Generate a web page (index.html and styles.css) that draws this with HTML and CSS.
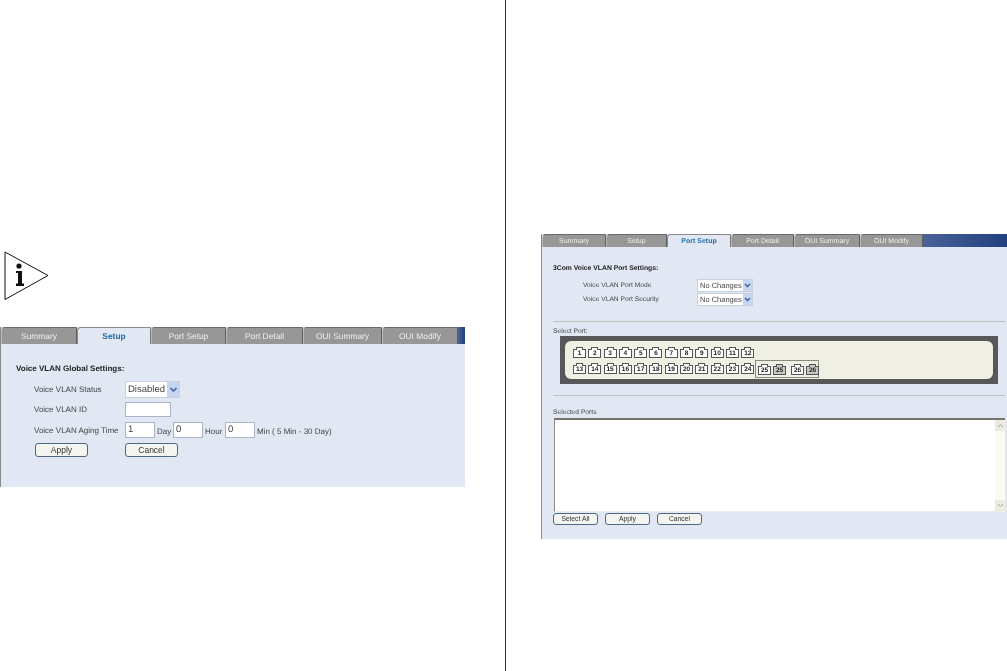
FILE: index.html
```html
<!DOCTYPE html>
<html lang="en">
<head>
<meta charset="utf-8">
<title>Voice VLAN</title>
<link rel="stylesheet" href="styles.css">
</head>
<body>
<div class="page">
  <section class="col-left">
    <svg class="note-icon" width="46" height="50" viewBox="0 0 46 50">
      <path d="M1 1 L44 24.500 L1 48.500 Z" fill="#fff" stroke="#111" stroke-width="1"/>
      <circle cx="15" cy="15" r="2.600" fill="#111"/>
      <path d="M12 20 H18 V32.500 H20 V35 H12 V32.500 H14 V22 H12 Z" fill="#111"/>
    </svg>
    <div class="panel panel-a">
      <nav class="tabs tabs-a">
        <div class="tab">Summary</div>
        <div class="tab active">Setup</div>
        <div class="tab">Port Setup</div>
        <div class="tab">Port Detail</div>
        <div class="tab">OUI Summary</div>
        <div class="tab">OUI Modify</div>
        <div class="tab-fill"></div>
      </nav>
      <div class="a-body">
        <h2 class="a-title">Voice VLAN Global Settings:</h2>
        <div class="a-row a-row-status">
          <span class="a-label">Voice VLAN Status</span>
          <div class="select select-a"><span class="select-value">Disabled</span><span class="select-arrow"><svg width="9" height="6" viewBox="0 0 9 6"><path d="M1.500 1 L4.500 4 L7.500 1" fill="none" stroke="#3d5f9e" stroke-width="1.500"/></svg></span></div>
        </div>
        <div class="a-row a-row-id">
          <span class="a-label">Voice VLAN ID</span>
          <div class="input input-id"></div>
        </div>
        <div class="a-row a-row-time">
          <span class="a-label">Voice VLAN Aging Time</span>
          <div class="input input-time">1</div><span class="unit unit-day">Day</span>
          <div class="input input-time">0</div><span class="unit unit-hour">Hour</span>
          <div class="input input-time">0</div><span class="unit unit-min">Min ( 5 Min - 30 Day)</span>
        </div>
        <div class="a-row a-row-btn">
          <div class="a-label"><button class="btn btn-a">Apply</button></div>
          <button class="btn btn-a btn-cancel">Cancel</button>
        </div>
      </div>
    </div>
  </section>
  <section class="col-right">
    <div class="panel panel-b">
      <nav class="tabs tabs-b">
        <div class="tab">Summary</div>
        <div class="tab">Setup</div>
        <div class="tab active">Port Setup</div>
        <div class="tab">Port Detail</div>
        <div class="tab">OUI Summary</div>
        <div class="tab">OUI Modify</div>
        <div class="tab-fill"></div>
      </nav>
      <div class="b-body">
        <h2 class="b-title">3Com Voice VLAN Port Settings:</h2>
        <div class="b-row">
          <span class="b-label">Voice VLAN Port Mode</span>
          <div class="select select-b"><span class="select-value">No Changes</span><span class="select-arrow"><svg width="7" height="5" viewBox="0 0 7 5"><path d="M1 1 L3.500 3.500 L6 1" fill="none" stroke="#3d5f9e" stroke-width="1.400"/></svg></span></div>
        </div>
        <div class="b-row">
          <span class="b-label">Voice VLAN Port Security</span>
          <div class="select select-b"><span class="select-value">No Changes</span><span class="select-arrow"><svg width="7" height="5" viewBox="0 0 7 5"><path d="M1 1 L3.500 3.500 L6 1" fill="none" stroke="#3d5f9e" stroke-width="1.400"/></svg></span></div>
        </div>
        <hr class="rule rule-one">
        <div class="b-caption caption-port">Select Port:</div>
        <div class="chassis">
          <div class="chassis-inner">
            <div class="ports">
              <div class="port"><i class="notch"></i><b>1</b></div>
              <div class="port"><i class="notch"></i><b>2</b></div>
              <div class="port"><i class="notch"></i><b>3</b></div>
              <div class="port"><i class="notch"></i><b>4</b></div>
              <div class="port"><i class="notch"></i><b>5</b></div>
              <div class="port"><i class="notch"></i><b>6</b></div>
              <div class="port"><i class="notch"></i><b>7</b></div>
              <div class="port"><i class="notch"></i><b>8</b></div>
              <div class="port"><i class="notch"></i><b>9</b></div>
              <div class="port"><i class="notch"></i><b>10</b></div>
              <div class="port"><i class="notch"></i><b>11</b></div>
              <div class="port"><i class="notch"></i><b>12</b></div>
              <div class="port"><i class="notch"></i><b>13</b></div>
              <div class="port"><i class="notch"></i><b>14</b></div>
              <div class="port"><i class="notch"></i><b>15</b></div>
              <div class="port"><i class="notch"></i><b>16</b></div>
              <div class="port"><i class="notch"></i><b>17</b></div>
              <div class="port"><i class="notch"></i><b>18</b></div>
              <div class="port"><i class="notch"></i><b>19</b></div>
              <div class="port"><i class="notch"></i><b>20</b></div>
              <div class="port"><i class="notch"></i><b>21</b></div>
              <div class="port"><i class="notch"></i><b>22</b></div>
              <div class="port"><i class="notch"></i><b>23</b></div>
              <div class="port"><i class="notch"></i><b>24</b></div>
            </div>
            <div class="sfp">
              <div class="port"><i class="notch"></i><b>25</b></div>
              <div class="port port-gray"><i class="notch"></i><b>25</b></div>
              <div class="port port-sep"><i class="notch"></i><b>26</b></div>
              <div class="port port-gray"><i class="notch"></i><b>26</b></div>
            </div>
          </div>
        </div>
        <hr class="rule rule-two">
        <div class="b-caption caption-selected">Selected Ports</div>
        <div class="textbox">
          <div class="textbox-main"></div>
          <div class="scroll">
            <span class="scroll-btn"><svg width="7" height="5" viewBox="0 0 7 5"><path d="M1 4 L3.500 1.500 L6 4" fill="none" stroke="#aaa69a" stroke-width="1"/></svg></span>
            <span class="scroll-track"></span>
            <span class="scroll-btn"><svg width="7" height="5" viewBox="0 0 7 5"><path d="M1 1 L3.500 3.500 L6 1" fill="none" stroke="#aaa69a" stroke-width="1"/></svg></span>
          </div>
        </div>
        <div class="b-buttons">
          <button class="btn btn-b">Select All</button>
          <button class="btn btn-b">Apply</button>
          <button class="btn btn-b">Cancel</button>
        </div>
      </div>
    </div>
  </section>
</div>
</body>
</html>
```
FILE: styles.css
```css
* { box-sizing: border-box; }
html, body { margin: 0; padding: 0; background: #fff; }
body { font-family: "Liberation Sans", Arial, sans-serif; color: #444; overflow: hidden; text-rendering: geometricPrecision; }
.page { display: flex; width: 1007px; height: 671px; will-change: transform; }

.col-left { width: 506px; height: 671px; padding-top: 251px; border-right: 1px solid #333; flex: none; }
.col-right { flex: 1; padding: 234px 0 0 35px; }
.note-icon { display: block; margin: 0 0 26px 4px; }

.panel { background: #e1e7f3; border-left: 1px solid #8a8a8a; }
.panel-a { width: 465px; height: 160px; }
.panel-b { width: 466px; height: 305px; }

.tabs { display: grid; align-items: stretch; background: #e1e7f3; }
.tabs-a { height: 17px; grid-template-columns: 76px 74px 75px 77px 79px 76px 1fr; font-size: 8.400px; }
.tabs-b { height: 13px; grid-template-columns: 64px 61px 64px 63px 66px 63px 1fr; font-size: 7px; }
.tab {
  display: flex; align-items: center; justify-content: center;
  background: #979797; color: #efefef;
  border-top: 1px solid #6a6a6a; border-right: 1px solid #5f5f5f; border-left: 1px solid #b9b9b9;
  border-top-left-radius: 4px;
}
.tab.active { background: #e1e7f3; color: #1b6ea8; font-weight: bold; border-top-color: #8a8a8a; border-left-color: #8a8a8a; border-right-color: #777; }
.tab-fill { background: linear-gradient(90deg, #4a6397, #21407f); }

.a-body { padding: 19px 0 0 15px; font-size: 8px; }
.a-title { margin: 0 0 7px; font-size: 8px; line-height: 11px; font-weight: bold; color: #222; }
.a-row { display: flex; align-items: center; padding-left: 18px; }
.a-label { width: 91px; flex: none; }
.a-row-status { height: 17px; }
.a-row-id { height: 15px; margin-top: 4px; }
.a-row-time { height: 16px; margin-top: 5px; }
.a-row-btn { height: 14px; margin-top: 5px; }
.unit { flex: none; padding-top: 3px; padding-left: 2px; white-space: nowrap; }
.unit-day { width: 18px; }
.unit-hour { width: 22px; }
.input { background: #fff; border: 1px solid #a9b4c6; font-size: 9.500px; line-height: 14px; padding-left: 2px; height: 100%; }
.input-id { width: 46px; }
.input-time { width: 30px; flex: none; }

.select { display: flex; align-items: center; background: #fff; border: 1px solid #c9cfdc; }
.select-a { width: 55px; height: 17px; font-size: 9.500px; }
.select-b { width: 56px; height: 13px; font-size: 7.500px; }
.select-value { flex: 1; padding-left: 2px; white-space: nowrap; overflow: hidden; }
.select-arrow { display: flex; align-items: center; justify-content: center; align-self: stretch; background: #c5d5f2; }
.select-a .select-arrow { width: 12px; }
.select-b .select-arrow { width: 9px; }

.btn {
  display: block; padding: 0; margin: 0; background: #f4f4f0; color: #333;
  border: 1px solid #4d6785; border-radius: 3px;
  font-family: "Liberation Sans", Arial, sans-serif;
}
.btn-a { width: 53px; height: 14px; font-size: 8.500px; line-height: 12px; margin-left: 1px; }
.btn-cancel { margin-left: 0; }
.btn-b { width: 45px; height: 12px; font-size: 6.800px; line-height: 10px; }

.b-body { padding: 17px 0 0 11px; font-size: 6.700px; }
.b-title { margin: 0 0 5px; font-size: 6.800px; line-height: 10px; font-weight: bold; color: #222; }
.b-row { display: flex; align-items: center; height: 13px; margin-bottom: 1px; padding-left: 30px; }
.b-label { width: 114px; flex: none; }
.rule { display: block; height: 1px; margin: 0; border: 0; background: #bcc3bf; width: 452px; }
.rule-one { margin-top: 15px; }
.rule-two { margin-top: 11px; }
.b-caption { line-height: 9px; }
.caption-port { margin-top: 5px; }
.caption-selected { margin-top: 12px; }

.chassis { width: 438px; height: 48px; margin: 0 0 0 7px; background: #58585a; padding: 5px; }
.chassis-inner { height: 38px; background: #f0efe3; border-radius: 6px; padding: 6px 0 0 8px; display: flex; align-items: flex-end; }
.ports { display: grid; grid-template-columns: repeat(12, 15.300px); grid-auto-rows: 16px; width: 184px; align-self: flex-start; }
.port { display: flex; flex-direction: column; align-items: center; width: 13px; height: 11px; }
.notch { display: block; width: 7px; height: 3px; border: 1px solid #555; border-bottom: 0; background: #fff; margin-bottom: -1px; position: relative; z-index: 1; }
.port b { flex: 1; width: 13px; font-weight: bold; font-size: 6.500px; text-align: center; line-height: 7px; background: #fff; border: 1px solid #555; color: #222; }
.port-gray b, .port-gray .notch { background: #c6c6c6; }
.sfp { display: flex; gap: 2px; width: 64px; height: 18px; margin: 0 0 1px -2px; padding: 3px 1px 0 2px; border: 1px solid #8a8a82; }
.port-sep { margin-left: 3px; }

.textbox { display: flex; width: 451px; height: 94px; margin: 1px 0 0 1px; background: #fff; border-top: 2px solid #74746a; border-left: 1px solid #8b8b80; border-bottom: 1px solid #f0efe3; }
.textbox-main { flex: 1; }
.scroll { width: 10px; display: flex; flex-direction: column; background: #fbfbf6; }
.scroll-btn { height: 11px; display: flex; align-items: center; justify-content: center; background: #ecebdf; }
.scroll-track { flex: 1; }
.b-buttons { display: flex; gap: 7px; margin-top: 1px; }
```
